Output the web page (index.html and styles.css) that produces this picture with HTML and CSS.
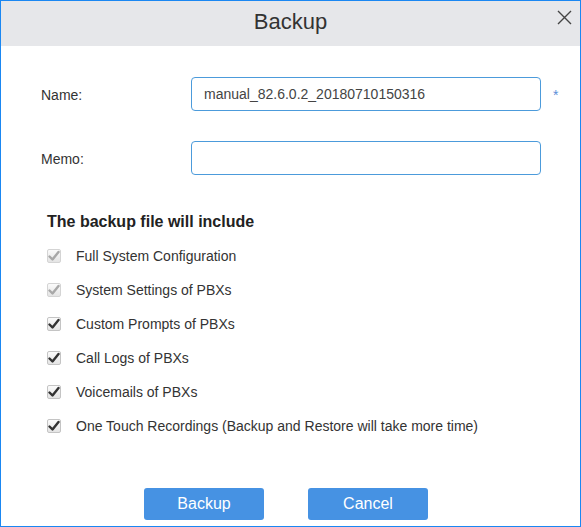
FILE: index.html
```html
<!DOCTYPE html>
<html>
<head>
<meta charset="utf-8">
<link rel="stylesheet" href="styles.css">
</head>
<body>
<div class="dialog">
  <div class="header">
    <span class="title">Backup</span>
    <span class="close">
      <svg width="15" height="15" viewBox="0 0 15 15"><path d="M1 1L14 14M14 1L1 14" stroke="#444" stroke-width="1.4" fill="none"/></svg>
    </span>
  </div>
  <div class="body">
    <div class="field field-first">
      <label class="label">Name:</label>
      <div class="input">manual_82.6.0.2_20180710150316</div>
      <span class="req">*</span>
    </div>
    <div class="field">
      <label class="label">Memo:</label>
      <div class="input"></div>
    </div>
    <div class="heading">The backup file will include</div>
    <ul class="checks">
      <li class="check disabled"><span class="box"><svg width="12" height="12" viewBox="0 0 12 12"><path d="M1.5 6.5L4.5 9.5L10.5 2" stroke="currentColor" stroke-width="2.4" fill="none" stroke-linecap="round" stroke-linejoin="round"/></svg></span>Full System Configuration</li>
      <li class="check disabled"><span class="box"><svg width="12" height="12" viewBox="0 0 12 12"><path d="M1.5 6.5L4.5 9.5L10.5 2" stroke="currentColor" stroke-width="2.4" fill="none" stroke-linecap="round" stroke-linejoin="round"/></svg></span>System Settings of PBXs</li>
      <li class="check"><span class="box"><svg width="12" height="12" viewBox="0 0 12 12"><path d="M1.5 6.5L4.5 9.5L10.5 2" stroke="currentColor" stroke-width="2.4" fill="none" stroke-linecap="round" stroke-linejoin="round"/></svg></span>Custom Prompts of PBXs</li>
      <li class="check"><span class="box"><svg width="12" height="12" viewBox="0 0 12 12"><path d="M1.5 6.5L4.5 9.5L10.5 2" stroke="currentColor" stroke-width="2.4" fill="none" stroke-linecap="round" stroke-linejoin="round"/></svg></span>Call Logs of PBXs</li>
      <li class="check"><span class="box"><svg width="12" height="12" viewBox="0 0 12 12"><path d="M1.5 6.5L4.5 9.5L10.5 2" stroke="currentColor" stroke-width="2.4" fill="none" stroke-linecap="round" stroke-linejoin="round"/></svg></span>Voicemails of PBXs</li>
      <li class="check"><span class="box"><svg width="12" height="12" viewBox="0 0 12 12"><path d="M1.5 6.5L4.5 9.5L10.5 2" stroke="currentColor" stroke-width="2.4" fill="none" stroke-linecap="round" stroke-linejoin="round"/></svg></span>One Touch Recordings (Backup and Restore will take more time)</li>
    </ul>
    <div class="buttons">
      <button class="btn">Backup</button>
      <button class="btn">Cancel</button>
    </div>
  </div>
</div>
</body>
</html>
```
FILE: styles.css
```css
* { box-sizing: border-box; }
html, body { margin: 0; padding: 0; background: #fff; }
body { font-family: "Liberation Sans", Arial, sans-serif; color: #333; }
.dialog {
  width: 581px;
  height: 527px;
  border: 1px solid #1a87f2;
  display: flex;
  flex-direction: column;
}
.header {
  height: 45px;
  background: #e6e7ea;
  display: flex;
  align-items: center;
  justify-content: center;
  position: relative;
}
.title {
  font-size: 22px;
  color: #333;
  line-height: 26px;
  margin-top: -4px;
}
.close {
  position: absolute;
  right: 8px;
  top: 9px;
  width: 15px;
  height: 15px;
  display: block;
}
.close svg { display: block; }
.body {
  padding: 0 0 0 40px;
  display: flex;
  flex-direction: column;
}
.field {
  display: flex;
  align-items: center;
  height: 34px;
  margin-top: 30px;
}
.field-first { margin-top: 31px; }
.label {
  width: 150px;
  font-size: 14px;
  color: #333;
  margin-top: 1px;
}
.input {
  width: 350px;
  height: 34px;
  border: 1px solid #4c9bdb;
  border-radius: 4px;
  padding: 0 12px;
  font-size: 14px;
  line-height: 32px;
  color: #444;
}
.req {
  margin-left: 12px;
  color: #5b8fd8;
  font-size: 14px;
  margin-top: 2px;
}
.heading {
  margin: 37px 0 0 6px;
  font-size: 16px;
  font-weight: bold;
  line-height: 20px;
  color: #222;
}
.checks {
  list-style: none;
  margin: 8px 0 0 0;
  padding: 0 0 0 6px;
}
.check {
  display: flex;
  align-items: center;
  height: 34px;
  font-size: 14px;
  color: #333;
  padding-bottom: 2px;
}
.box {
  width: 14px;
  height: 14px;
  border: 1px solid #c4c4c4;
  border-radius: 2px;
  background: linear-gradient(#fbfbfb, #e4e4e4);
  margin-right: 15px;
  display: flex;
  align-items: center;
  justify-content: center;
  color: #333;
  margin-top: -1px;
}
.box svg { display: block; }
.check.disabled .box { color: #a8a8a8; border-color: #d4d4d4; }
.buttons {
  display: flex;
  gap: 44px;
  margin: 44px 0 0 103px;
}
.btn {
  width: 120px;
  height: 32px;
  border: none;
  border-radius: 3px;
  background: #4692e3;
  color: #fff;
  font-family: "Liberation Sans", Arial, sans-serif;
  font-size: 16px;
  padding: 0;
}
```
